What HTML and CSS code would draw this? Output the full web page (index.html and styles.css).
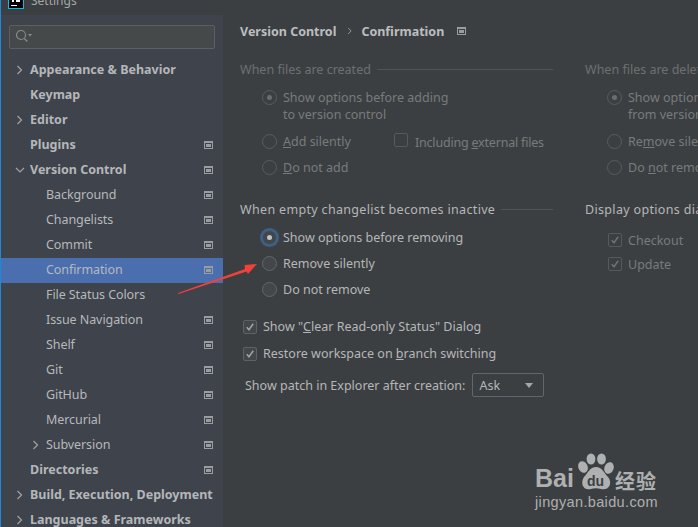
FILE: index.html
```html
<!DOCTYPE html>
<html lang="en">
<head>
<meta charset="utf-8">
<title>Settings</title>
<link rel="stylesheet" href="styles.css">
</head>
<body>
<svg width="0" height="0" class="defs"><defs>
<symbol id="proj" viewBox="0 0 9 8"><rect x="0.5" y="0.5" width="8" height="7" fill="none" stroke="currentColor"/><rect x="2" y="3" width="5" height="3" fill="currentColor"/><rect x="0.5" y="0.5" width="8" height="1.5" fill="currentColor"/></symbol>
<symbol id="chev-r" viewBox="0 0 8 10"><path d="M1.5 1l4 4-4 4" fill="none" stroke="currentColor" stroke-width="1.2"/></symbol>
<symbol id="chev-d" viewBox="0 0 10 8"><path d="M1 2l4 4 4-4" fill="none" stroke="currentColor" stroke-width="1.2"/></symbol>
<symbol id="tick" viewBox="0 0 14 14"><path d="M3.2 7.2l2.6 3 5-7" fill="none" stroke="currentColor" stroke-width="1.7"/></symbol>
</defs></svg>
<div class="window">
  <header class="titlebar">
    <svg class="logo" width="16" height="9" viewBox="0 0 16 9"><rect x="0.5" y="-2" width="15" height="10.5" fill="#000" stroke="#17b5e8"/><rect x="4" y="0" width="2" height="2" fill="#fff"/><rect x="8" y="0" width="4" height="2" fill="#fff"/><rect x="3" y="5" width="6" height="1" fill="#fff"/></svg>
    <span class="title">Settings</span>
  </header>
  <div class="main">
    <aside class="sidebar">
      <div class="search"><svg class="search-icon" width="20" height="14" viewBox="0 0 20 14"><circle cx="6" cy="6" r="4.5" fill="none" stroke="#8b8e90" stroke-width="1.1"/><path d="M9.3 9.5l3 3" stroke="#8b8e90" stroke-width="1.2"/><path d="M13 5h4l-2 2.4z" fill="#8b8e90"/></svg></div>
      <nav class="tree">
        <div class="row top"><svg class="arrow"><use href="#chev-r"/></svg><span>Appearance &amp; Behavior</span></div>
        <div class="row top"><span>Keymap</span></div>
        <div class="row top"><svg class="arrow"><use href="#chev-r"/></svg><span>Editor</span></div>
        <div class="row top"><span>Plugins</span><svg class="proj"><use href="#proj"/></svg></div>
        <div class="row top"><svg class="arrow down"><use href="#chev-d"/></svg><span>Version Control</span><svg class="proj"><use href="#proj"/></svg></div>
        <div class="row sub"><span>Background</span><svg class="proj"><use href="#proj"/></svg></div>
        <div class="row sub"><span>Changelists</span><svg class="proj"><use href="#proj"/></svg></div>
        <div class="row sub"><span>Commit</span><svg class="proj"><use href="#proj"/></svg></div>
        <div class="row sub selected"><span>Confirmation</span><svg class="proj"><use href="#proj"/></svg></div>
        <div class="row sub"><span>File Status Colors</span></div>
        <div class="row sub"><span>Issue Navigation</span><svg class="proj"><use href="#proj"/></svg></div>
        <div class="row sub"><span>Shelf</span><svg class="proj"><use href="#proj"/></svg></div>
        <div class="row sub"><span>Git</span><svg class="proj"><use href="#proj"/></svg></div>
        <div class="row sub"><span>GitHub</span><svg class="proj"><use href="#proj"/></svg></div>
        <div class="row sub"><span>Mercurial</span><svg class="proj"><use href="#proj"/></svg></div>
        <div class="row sub"><svg class="arrow sub-arrow"><use href="#chev-r"/></svg><span>Subversion</span><svg class="proj"><use href="#proj"/></svg></div>
        <div class="row top"><span>Directories</span><svg class="proj"><use href="#proj"/></svg></div>
        <div class="row top"><svg class="arrow"><use href="#chev-r"/></svg><span>Build, Execution, Deployment</span></div>
        <div class="row top"><svg class="arrow"><use href="#chev-r"/></svg><span>Languages &amp; Frameworks</span></div>
      </nav>
    </aside>
    <main class="content">
      <div class="crumbs"><span>Version Control</span><svg class="crumb-sep"><use href="#chev-r"/></svg><span>Confirmation</span><svg class="proj crumb-proj"><use href="#proj"/></svg></div>
      <div class="columns">
        <section class="group dim">
          <div class="group-title"><span>When files are created</span><i></i></div>
          <div class="opt first"><b class="radio on"></b><span>Show options before adding<br>to version control</span></div>
          <div class="opt gap"><b class="radio"></b><span class="add"><u>A</u>dd silently</span><b class="check inline"></b><span class="inc">Including <u>e</u>xternal files</span></div>
          <div class="opt gap"><b class="radio"></b><span><u>D</u>o not add</span></div>
        </section>
        <section class="group dim">
          <div class="group-title"><span>When files are deleted</span><i></i></div>
          <div class="opt first"><b class="radio on"></b><span>Show options before removing<br>from version control</span></div>
          <div class="opt gap"><b class="radio"></b><span>Re<u>m</u>ove silently</span></div>
          <div class="opt gap"><b class="radio"></b><span>Do <u>n</u>ot remove</span></div>
        </section>
        <section class="group second">
          <div class="group-title"><span class="wide">When empty changelist becomes inactive</span><i></i></div>
          <div class="opt first"><b class="radio on focus"></b><span>Show options before removing</span></div>
          <div class="opt gap"><b class="radio"></b><span>Remove silently</span></div>
          <div class="opt gap"><b class="radio"></b><span>Do not remove</span></div>
        </section>
        <section class="group second">
          <div class="group-title"><span class="bright wide">Display options dialog when these commands are invoked</span><i></i></div>
          <div class="opt chk first dim low"><b class="check"><svg><use href="#tick"/></svg></b><span>Checkout</span></div>
          <div class="opt chk dim tight"><b class="check"><svg><use href="#tick"/></svg></b><span>Update</span></div>
        </section>
      </div>
      <div class="checks">
        <div class="opt chk"><b class="check"><svg><use href="#tick"/></svg></b><span>Show "<u>C</u>lear Read-only Status" Dialog</span></div>
        <div class="opt chk"><b class="check"><svg><use href="#tick"/></svg></b><span>Restore workspace on <u>b</u>ranch switching</span></div>
      </div>
      <div class="patch"><span>Show patch in Explorer after creation:</span><div class="select"><span>Ask</span><em></em></div></div>
    </main>
  </div>
</div>
<svg class="annot" width="90" height="40" viewBox="0 0 90 40"><path d="M0 33L67 9 66.5 5 79 4 70 14 68.5 11.5 0.5 34z" fill="#f0413a"/></svg>
<div class="watermark">
  <div class="wm-top"><span class="wm-bai">Bai</span>
    <span class="wm-paw"><svg width="38" height="40" viewBox="0 0 38 40"><g fill="#aeb0b1"><ellipse cx="6" cy="14" rx="4.6" ry="6" transform="rotate(-25 6 14)"/><ellipse cx="14" cy="6" rx="4.4" ry="5.6"/><ellipse cx="24.5" cy="6" rx="4.4" ry="5.6"/><ellipse cx="32" cy="15" rx="4.6" ry="6" transform="rotate(20 32 15)"/><path d="M19 14c6 0 8 6 12 10 5 6 1 14-7 12-3-.8-7-1-10 0-8 2-11-6-7-12 4-4 6-10 12-10z"/></g></svg><span class="wm-du">du</span></span>
    <span class="wm-cn">经验</span></div>
  <div class="wm-url">jingyan.baidu.com</div>
</div>
</body>
</html>
```
FILE: styles.css
```css
* { box-sizing: border-box; }
html, body { margin: 0; padding: 0; height: 100%; overflow: hidden; background: #3c3f41; }
body { font-family: "Noto Sans", "Noto Sans CJK SC", sans-serif; font-size: 12.5px; color: #b4b7b9; position: relative; }
.defs { position: absolute; }
.window { width: 698px; height: 527px; display: flex; flex-direction: column; border-left: 1px solid #1e88dc; overflow: hidden; }
.titlebar { height: 15px; flex: none; background: #3c3f41; display: flex; align-items: flex-end; overflow: hidden; padding-left: 7px; }
.logo { flex: none; align-self: flex-start; }
.title { font-size: 12px; line-height: 16px; margin: 0 0 6px 7px; color: #a5a8aa; }
.main { flex: 1; display: flex; min-height: 0; }
.sidebar { width: 222px; flex: none; background: #3f434c; padding-top: 10px; overflow: hidden; }
.search { height: 24px; margin: 0 8px; border: 1px solid #5d6062; border-radius: 2px; background: #45494a; padding: 3px 0 0 5px; }
.search-icon { display: block; }
.tree { margin-top: 9px; }
.row { height: 25px; display: flex; align-items: center; padding: 0 10px 2px 29px; position: relative; color: #b6b9bb; white-space: nowrap; }
.row > span { flex: 1; }
.top { font-weight: 700; font-size: 12.5px; color: #b4b7ba; }
.sub { padding-left: 45px; letter-spacing: -0.08px; }
.selected { background: #4b6eaf; }
.arrow { position: absolute; left: 15px; top: 7px; width: 8px; height: 10px; color: #a0a3a5; }
.arrow.down { left: 14px; width: 10px; height: 8px; top: 8px; }
.arrow.sub-arrow { left: 31px; }
.proj { width: 9px; height: 8px; flex: none; color: #9a9da0; }
.content { flex: 1; min-width: 0; padding: 6px 0 0 17px; overflow: hidden; }
.crumbs { display: flex; align-items: center; height: 20px; font-weight: 700; font-size: 12.5px; color: #bbbec0; white-space: nowrap; }
.crumb-sep { width: 6px; height: 8px; margin: 0 8px 0 11px; color: #9a9da0; }
.crumb-proj { margin-left: 13px; }
.columns { display: grid; grid-template-columns: 313px 400px; column-gap: 32px; margin-top: 18px; }
.group-title { display: flex; align-items: center; height: 20px; white-space: nowrap; }
.group-title i { flex: 1; height: 1px; background: #515456; margin-left: 6px; }
.wide { letter-spacing: 0.33px; }
.second { margin-top: 23px; }
.dim { color: #787b7d; }
.dim .group-title { color: #6d7072; }
.bright { color: #b4b7b9; }
.opt { display: flex; align-items: flex-start; padding-left: 22px; line-height: 17px; white-space: nowrap; }
.first { margin-top: 10px; }
.gap { margin-top: 9px; }
.dim .first + .gap { margin-top: 10px; }
.radio { width: 15px; height: 15px; border-radius: 50%; border: 1px solid #5a5d5f; background: #3c3f41; flex: none; margin: 1px 6px 0 0; position: relative; }
.second .radio { background: #43474a; border-color: #646769; }
.radio.on::after { content: ""; position: absolute; left: 4px; top: 4px; width: 5px; height: 5px; border-radius: 50%; background: #6a6d6f; }
.radio.focus { box-shadow: 0 0 0 2px #3d6185; border-color: #3d6185; }
.radio.focus::after { background: #bfc2c4; }
.check { width: 14px; height: 14px; border: 1px solid #5f6264; border-radius: 2px; flex: none; margin: 1px 6px 0 0; background: #43474a; color: #a2a5a7; display: block; }
.check svg { width: 12px; height: 12px; display: block; }
.add { width: 111px; flex: none; }
.check.inline { margin: 0 7px 0 0; background: transparent; }
.dim .check { background: transparent; color: #6f7274; border-color: #57595b; }
.chk { padding-left: 23px; }
.low { margin-top: 13px; }
.tight { margin-top: 7px; }
.inc { position: relative; top: 1px; letter-spacing: -0.2px; }
.checks { margin-top: 15px; }
.checks .opt { padding-left: 3px; height: 27px; align-items: center; }
.checks .check { margin: 0 6px 0 0; }
.patch { display: flex; align-items: center; margin: 6px 0 0 5px; white-space: nowrap; }
.select { width: 72px; height: 24px; border: 1px solid #646769; border-radius: 2px; margin-left: 7px; padding: 0 6px; display: flex; align-items: center; justify-content: space-between; background: #3c3f41; }
.select em { width: 0; height: 0; border: 4px solid transparent; border-top: 5px solid #a5a8aa; border-bottom: 0; margin-right: 4px; }
.annot { position: absolute; left: 178px; top: 260px; }
.watermark { position: absolute; left: 535px; top: 453px; width: 130px; color: #aeb0b1; }
.wm-top { display: flex; align-items: flex-end; height: 40px; }
.wm-bai { font-family: "Liberation Sans", sans-serif; font-weight: 700; font-size: 25px; line-height: 30px; width: 42px; }
.wm-paw { width: 38px; height: 40px; position: relative; flex: none; }
.wm-paw svg { display: block; }
.wm-du { position: absolute; left: 10px; top: 20px; font: 700 14px/16px "Liberation Sans", sans-serif; color: #3c3f41; }
.wm-cn { font-family: "Noto Sans CJK SC", sans-serif; font-weight: 700; font-size: 20px; line-height: 24px; letter-spacing: 1px; }
.wm-url { font-family: "Liberation Sans", sans-serif; font-size: 14.5px; line-height: 16px; margin-top: 1px; letter-spacing: 0.35px; }
```
